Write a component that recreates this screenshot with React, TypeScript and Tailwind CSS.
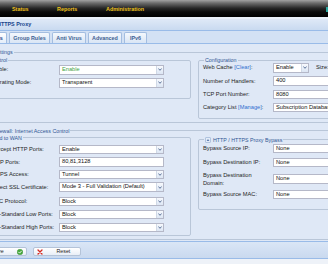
import React from "react";

function Trigger() {
  return (
    <div className="w-[7px] h-full shrink-0 border-l border-[#d0d9e6] bg-[linear-gradient(to_bottom,#f7f9fd,#dce6f4)] flex items-center justify-center">
      <svg width="4" height="3" viewBox="0 0 4 3">
        <path d="M0.4 0.5 L2 2.3 L3.6 0.5" stroke="#4d6791" strokeWidth="0.9" fill="none" />
      </svg>
    </div>
  );
}

function Box({
  children,
  className = "",
  trigger = false,
  textClass = "text-[#111]",
}: {
  children: React.ReactNode;
  className?: string;
  trigger?: boolean;
  textClass?: string;
}) {
  return (
    <div className={`flex shrink-0 h-[9.5px] bg-white border border-[#b5b8c8] ${className}`}>
      <div className={`flex-1 min-w-0 pl-[2px] leading-[7.5px] whitespace-nowrap overflow-hidden ${textClass}`}>
        {children}
      </div>
      {trigger && <Trigger />}
    </div>
  );
}

function Row({
  label,
  children,
  className = "",
}: {
  label: React.ReactNode;
  children: React.ReactNode;
  className?: string;
}) {
  return (
    <div className={`flex items-center ${className}`}>
      <div className="w-[70px] shrink-0 whitespace-nowrap text-[#1e1e1e] leading-[7px]">{label}</div>
      {children}
    </div>
  );
}

function Tab({ children, className = "", active = false }: { children: React.ReactNode; className?: string; active?: boolean }) {
  return (
    <div
      className={`h-[11px] shrink-0 flex items-center justify-center rounded-t-[2px] border border-b-0 border-[#a3bde0] font-bold text-[5.4px] whitespace-nowrap ${
        active
          ? "bg-[linear-gradient(to_bottom,#ffffff,#e4edf9)] text-[#15428b]"
          : "bg-[linear-gradient(to_bottom,#f4f8fd,#d9e5f5)] text-[#3e5f92]"
      } ${className}`}
    >
      {children}
    </div>
  );
}

function CheckIcon() {
  return (
    <svg width="6" height="6" viewBox="0 0 12 12">
      <circle cx="6" cy="6" r="5.6" fill="#46a83c" stroke="#2f8a2a" strokeWidth="0.8" />
      <path d="M3.2 6.2 L5.2 8.2 L8.9 4.2" stroke="#fff" strokeWidth="1.8" fill="none" strokeLinecap="round" strokeLinejoin="round" />
    </svg>
  );
}

function CrossIcon() {
  return (
    <svg width="6" height="6" viewBox="0 0 12 12">
      <path d="M2 2 L10 10 M10 2 L2 10" stroke="#d6281f" strokeWidth="2.6" strokeLinecap="round" />
    </svg>
  );
}

const fs = "border border-[#b9c6d8] rounded-[2px]";
const lg = "px-[1px] text-[5.3px] leading-[6px] text-[#2f5794] whitespace-nowrap";
const link = "text-[#2f6fd0]";

export default function App() {
  return (
    <div className="w-[328px] h-[264px] overflow-hidden bg-[#eef2f8] font-['Liberation_Sans',Arial,sans-serif] text-[5.7px]">
      {/* top navigation */}
      <div className="h-[17px] flex items-center pt-[1px] bg-[linear-gradient(to_bottom,#a2a2a2_0%,#6c6c6c_18%,#272727_48%,#0b0b0b_70%,#000_100%)]">
        <span className="ml-[12px] w-[45px] font-bold text-[5.4px] text-[#efc21c]">Status</span>
        <span className="w-[49px] font-bold text-[5.4px] text-[#efc21c]">Reports</span>
        <span className="font-bold text-[5.4px] text-[#efc21c]">Administration</span>
        <span className="ml-auto w-[2px] h-[5px] bg-[#2aa7a0]" />
      </div>
      <div className="h-[2px] bg-[#eaf1fa]" />

      {/* panel title */}
      <div className="h-[12px] border-b border-[#99bbe8] bg-[linear-gradient(to_bottom,#dfe9f7,#c9daf0)] flex items-center">
        <span className="-ml-[3px] font-bold text-[5.4px] text-[#15428b] whitespace-nowrap">HTTPS Proxy</span>
      </div>

      {/* tabs */}
      <div className="h-[13px] border-b border-[#99bbe8] bg-[#d3e1f4] flex items-end gap-[2px]">
        <Tab className="w-[30px] -ml-[23px]" active>
          Settings
        </Tab>
        <Tab className="w-[41px]">Group Rules</Tab>
        <Tab className="w-[34px]">Anti Virus</Tab>
        <Tab className="w-[34px]">Advanced</Tab>
        <Tab className="w-[23px]">IPv6</Tab>
      </div>

      {/* content */}
      <div className="bg-[#dfe8f6] pt-[5px] pb-[1px]">
        <fieldset className={`-ml-[40px] w-[460px] pl-[23px] pt-[2px] pb-[3px] ${fs}`}>
          <legend className={`ml-[8.5px] ${lg}`}>Settings</legend>
          <div className="flex items-start gap-[7px]">
            <fieldset className={`w-[207px] shrink-0 pl-[4px] pt-[2px] pb-[10px] ${fs}`}>
              <legend className={lg}>Control</legend>
              <Row label="Enable:">
                <Box trigger className="w-[105px]" textClass="text-[#3fa33f]">
                  Enable
                </Box>
              </Row>
              <Row className="mt-[3.5px]" label="Operating Mode:">
                <Box trigger className="w-[105px]">
                  Transparent
                </Box>
              </Row>
            </fieldset>
            <fieldset className={`flex-1 min-w-0 pl-[4px] pt-0 pb-[6px] ${fs}`}>
              <legend className={`ml-[1px] ${lg}`}>Configuration</legend>
              <Row
                label={
                  <>
                    Web Cache <span className={link}>[Clear]</span>:
                  </>
                }
              >
                <Box trigger className="w-[36px]">
                  Enable
                </Box>
                <span className="ml-[7px] text-[#1e1e1e] whitespace-nowrap">Size:</span>
              </Row>
              <Row className="mt-[3.8px]" label="Number of Handlers:">
                <Box className="w-[105px]">400</Box>
              </Row>
              <Row className="mt-[3.8px]" label="TCP Port Number:">
                <Box className="w-[105px]">8080</Box>
              </Row>
              <Row
                className="mt-[3.8px]"
                label={
                  <>
                    Category List <span className={link}>[Manage]</span>:
                  </>
                }
              >
                <Box className="w-[105px]">Subscription Database</Box>
              </Row>
            </fieldset>
          </div>
        </fieldset>

        <fieldset className={`mt-[4.5px] -ml-[40px] w-[460px] pl-[23px] pt-[1px] pb-[3px] ${fs}`}>
          <legend className={`ml-[8.5px] ${lg}`}>Firewall: Internet Access Control</legend>
          <div className="flex items-start gap-[7px]">
            <fieldset className={`w-[207px] shrink-0 pl-[4px] pt-[4px] pb-[2.5px] ${fs}`}>
              <legend className={lg}>Send to WAN</legend>
              <Row label="Intercept HTTP Ports:">
                <Box trigger className="w-[105px]">
                  Enable
                </Box>
              </Row>
              <Row className="mt-[3px]" label="HTTP Ports:">
                <Box className="w-[105px]">80,81,3128</Box>
              </Row>
              <Row className="mt-[3px]" label="HTTPS Access:">
                <Box trigger className="w-[105px]">
                  Tunnel
                </Box>
              </Row>
              <Row className="mt-[3px]" label="Inspect SSL Certificate:">
                <Box trigger className="w-[105px]">
                  Mode 3 - Full Validation (Default)
                </Box>
              </Row>
              <Row className="mt-[5px]" label="QUIC Protocol:">
                <Box trigger className="w-[105px]">
                  Block
                </Box>
              </Row>
              <Row className="mt-[3.5px]" label="Non-Standard Low Ports:">
                <Box trigger className="w-[105px]">
                  Block
                </Box>
              </Row>
              <Row className="mt-[3.5px]" label="Non-Standard High Ports:">
                <Box trigger className="w-[105px]">
                  Block
                </Box>
              </Row>
            </fieldset>
            <fieldset className={`mt-[2px] flex-1 min-w-0 pl-[4px] pt-[1px] pb-[10px] ${fs}`}>
              <legend className={`ml-[1px] ${lg}`}>
                <div className="flex items-center gap-[2px]">
                  <svg width="6" height="6" viewBox="0 0 6 6">
                    <rect x="0.5" y="0.5" width="5" height="5" rx="0.6" fill="#e3ecf8" stroke="#8ea9cf" strokeWidth="0.6" />
                    <path d="M1.6 3.8 L3 2.2 L4.4 3.8 Z" fill="#2f5794" />
                  </svg>
                  <span>HTTP / HTTPS Proxy Bypass</span>
                </div>
              </legend>
              <Row label="Bypass Source IP:">
                <Box className="w-[105px]">None</Box>
              </Row>
              <Row className="mt-[4.5px]" label="Bypass Destination IP:">
                <Box className="w-[105px]">None</Box>
              </Row>
              <div className="flex items-center mt-[3.5px]">
                <div className="w-[70px] shrink-0 text-[#1e1e1e] leading-[8px]">
                  Bypass Destination
                  <br />
                  Domain:
                </div>
                <Box className="w-[105px]">None</Box>
              </div>
              <Row className="mt-[3px]" label="Bypass Source MAC:">
                <Box className="w-[105px]">None</Box>
              </Row>
            </fieldset>
          </div>
        </fieldset>
      </div>

      {/* footer toolbar */}
      <div className="h-[18px] border-y border-[#99bbe8] bg-[linear-gradient(to_bottom,#dae6f6,#c9d9ef)] pt-[5px] flex items-start">
        <div className="-ml-[13px] w-[40px] h-[9.5px] shrink-0 flex items-center justify-between pl-[3.5px] pr-[3.5px] rounded-[2px] border border-[#b4c3d8] bg-[linear-gradient(to_bottom,#ffffff,#e8eef7)] text-[5.3px] text-[#222]">
          <span>Save</span>
          <CheckIcon />
        </div>
        <div className="ml-[6px] w-[48px] h-[9.5px] shrink-0 flex items-center pl-[2.5px] rounded-[2px] border border-[#b4c3d8] bg-[linear-gradient(to_bottom,#ffffff,#e8eef7)] text-[5.3px] text-[#222]">
          <CrossIcon />
          <span className="ml-[14px]">Reset</span>
        </div>
      </div>
    </div>
  );
}
